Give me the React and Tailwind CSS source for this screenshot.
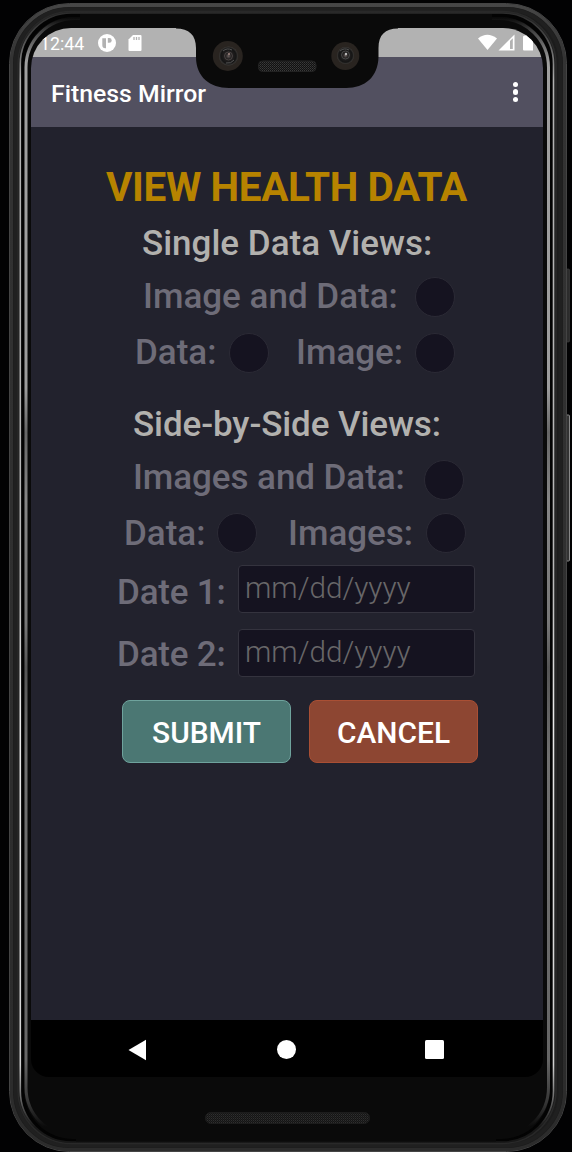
import React from "react";

function Bezel() {
  return (
    <svg className="absolute inset-0" width="572" height="1152" viewBox="0 0 572 1152" fill="none">
      <defs>
        <linearGradient id="rim" x1="0" y1="0" x2="0" y2="1152" gradientUnits="userSpaceOnUse">
          <stop offset="0" stopColor="#484848" />
          <stop offset="0.05" stopColor="#333" />
          <stop offset="0.95" stopColor="#2c2c2c" />
          <stop offset="1" stopColor="#2c2c2c" />
        </linearGradient>
        <linearGradient id="shine" x1="0" y1="18" x2="0" y2="1138" gradientUnits="userSpaceOnUse">
          <stop offset="0" stopColor="#0a0a0a" />
          <stop offset="0.012" stopColor="#444" />
          <stop offset="0.04" stopColor="#a0a0a0" />
          <stop offset="0.33" stopColor="#9c9c9c" />
          <stop offset="0.37" stopColor="#666" />
          <stop offset="0.43" stopColor="#858585" />
          <stop offset="0.54" stopColor="#777" />
          <stop offset="0.58" stopColor="#555" />
          <stop offset="0.66" stopColor="#707070" />
          <stop offset="0.93" stopColor="#666" />
          <stop offset="0.97" stopColor="#333" />
          <stop offset="0.99" stopColor="#0a0a0a" />
        </linearGradient>
        <linearGradient id="edge" x1="0" y1="13" x2="0" y2="1144" gradientUnits="userSpaceOnUse">
          <stop offset="0" stopColor="#2c2c2c" />
          <stop offset="0.02" stopColor="#444" />
          <stop offset="0.06" stopColor="#b0b0b0" />
          <stop offset="0.5" stopColor="#b8b8b8" />
          <stop offset="0.62" stopColor="#e8e8e8" />
          <stop offset="0.93" stopColor="#d0d0d0" />
          <stop offset="0.965" stopColor="#555" />
          <stop offset="0.985" stopColor="#181818" />
        </linearGradient>
      </defs>
      <rect x="565" y="269" width="4.500" height="73" rx="1" fill="#2c2c2c" stroke="#444" strokeWidth=".6" />
      <rect x="565" y="415" width="4.500" height="146" rx="1" fill="#333" stroke="#888" strokeWidth="1" />
      <rect x="9.5" y="3.5" width="557" height="1148" rx="60" fill="#1c1c1c" stroke="#444" strokeWidth="1" />
      <rect x="11.500" y="5.500" width="553" height="1144" rx="58" stroke="url(#rim)" strokeWidth="3" />
      <rect x="15.500" y="9.500" width="545" height="1136" rx="54" stroke="#202020" strokeWidth="4" />
      <rect x="18" y="11.500" width="538" height="1132" rx="53" stroke="#292929" strokeWidth="1.500" />
      <rect x="20.300" y="13" width="533.200" height="1129" rx="51" fill="#030303" stroke="url(#edge)" strokeWidth="1.600" />
      <rect x="24" y="17" width="526" height="1122" rx="49" fill="#0a0a0a" />
      <rect x="26" y="18.500" width="522.500" height="1118" rx="49" stroke="url(#shine)" strokeWidth="3" />
      <rect x="80" y="14" width="412" height="12" fill="#0a0a0a" />
      <rect x="76" y="1128" width="420" height="13.500" fill="#0a0a0a" />
    </svg>
  );
}

function Notch() {
  return (
    <svg className="absolute left-[176px] top-[27px]" width="222" height="62" viewBox="176 27 222 62" fill="none">
      <defs>
        <pattern id="mesh" width="2" height="2" patternUnits="userSpaceOnUse">
          <rect width="2" height="2" fill="#111" />
          <rect width="1" height="1" fill="#3a3a3a" />
          <rect x="1" y="1" width="1" height="1" fill="#2c2c2c" />
        </pattern>
        <radialGradient id="lens">
          <stop offset="0" stopColor="#6b6260" />
          <stop offset="0.3" stopColor="#252222" />
          <stop offset="0.8" stopColor="#151515" />
          <stop offset="1" stopColor="#3c3a38" />
        </radialGradient>
      </defs>
      <path d="M176 27V28.500C189 28.500 196 35 196 48V57C196 77 210 88 229 88H346C365 88 378 77 378.500 57V48C378.500 35 385 28.500 398 28.500V27Z" fill="#0a0a0a" />
      <circle cx="227.800" cy="56" r="15" fill="#292420" />
      <circle cx="228.500" cy="56" r="9.500" fill="url(#lens)" />
      <path d="M223 51a8 8 0 0 1 9-1M234 60a8 8 0 0 1-8 3" stroke="#555" />
      <circle cx="228.500" cy="56" r="4" stroke="#494342" />
      <circle cx="229" cy="54" r="1" fill="#a78b86" />
      <circle cx="345.300" cy="56" r="14" fill="#292420" />
      <circle cx="345.500" cy="55.500" r="8.500" fill="url(#lens)" />
      <path d="M340 51a8 8 0 0 1 9-1" stroke="#555" />
      <circle cx="345.500" cy="55" r="4" stroke="#494949" />
      <circle cx="346" cy="54" r="1.200" fill="#bbb" />
      <rect x="258.500" y="61" width="57.500" height="10.500" rx="4" fill="url(#mesh)" stroke="#222" />
    </svg>
  );
}

function StatusBar() {
  return (
    <div className="flex h-[29px] shrink-0 items-center bg-[#b2b2b2] text-white">
      <span className="ml-[9px] w-[58px] whitespace-nowrap pt-[2px] text-[17.8px] leading-none">12:44</span>
      <svg width="18" height="18" viewBox="0 0 18 18">
        <circle cx="9" cy="9" r="9" fill="#fff" />
        <path d="M4.300 4.200H8V14.200H7.300A3 3 0 0 1 4.300 11.200Z" fill="#b2b2b2" />
        <path d="M9.800 4H11.300A2.400 2.400 0 0 1 11.300 8.800H9.800Z" fill="#b2b2b2" />
      </svg>
      <svg className="ml-[12px]" width="14" height="16" viewBox="0 0 14 16">
        <path d="M5 0H12.500Q13.500 0 13.500 1V15Q13.500 16 12.500 16H1.500Q.5 16 .5 15V4.500Z" fill="#fff" />
        <path d="M6 2v3M8.500 2v3M11 2v3" stroke="#b2b2b2" strokeWidth="1.300" />
      </svg>
      <svg className="ml-auto mr-[8px]" width="57" height="17" viewBox="0 0 57 17">
        <path d="M0 4.500Q9.300-3 19 4.500L9.500 16Z" fill="#fff" />
        <path d="M20.500 16.500L36.500 .5V16.500Z" fill="#fff" />
        <path d="M32 7L34.800 4.300V15H32Z" fill="#b2b2b2" />
        <path d="M45 3Q45 1.500 46.500 1.500H48V0H52V1.500H55V16.500H46Q45 16.500 45 15.500Z" fill="#fff" />
      </svg>
    </div>
  );
}

function AppBar() {
  return (
    <header className="flex h-[70px] shrink-0 items-center justify-between bg-[#525060] pl-[20px] pr-[25px]">
      <h1 className="pt-[5px] text-[24.8px] font-medium leading-none text-white">Fitness Mirror</h1>
      <button className="flex flex-col gap-[2px]" aria-label="More options">
        <span className="size-[5.5px] rounded-full bg-white" />
        <span className="size-[5.5px] rounded-full bg-white" />
        <span className="size-[5.5px] rounded-full bg-white" />
      </button>
    </header>
  );
}

const Radio = () => <span className="size-[40px] shrink-0 rounded-full border border-[#2b2a35] bg-[#151320]" />;

function DateField({ label }) {
  return (
    <label className="flex h-[48px] items-center pl-[86px]">
      <span className={`w-[121px] shrink-0 tracking-[-0.2px] text-[#6e6c78] ${label === "Date 1:" ? "pt-[8px]" : "pt-[3px]"}`}>
        {label}
      </span>
      <span className="flex h-[48px] w-[237px] items-center rounded-[4px] border border-[#34333e] bg-[#151320] pb-[2px] pl-[6px] text-[29.7px] font-light text-[#686769]">
        mm/dd/yyyy
      </span>
    </label>
  );
}

function HealthForm() {
  return (
    <main className="flex h-[893px] shrink-0 flex-col whitespace-nowrap bg-[#22222d] pt-[40px] text-[35px] font-medium leading-[40px] text-[#6e6c78]">
      <h2 className="h-[40px] pl-[75px] text-[40.5px] font-bold tracking-[-0.4px] text-[#b78300]">VIEW HEALTH DATA</h2>
      <h3 className="mt-[17px] h-[39px] pl-[111px] text-[#b2b1ae]">Single Data Views:</h3>
      <div className="mt-[14px] flex h-[40px] pl-[112px]">
        <span className="w-[272px]">Image and Data:</span>
        <Radio />
      </div>
      <div className="mt-[16px] flex h-[40px] pl-[104px]">
        <span className="w-[94px]">Data:</span>
        <Radio />
        <span className="ml-[27px] w-[119px]">Image:</span>
        <Radio />
      </div>
      <h3 className="mt-[32px] h-[39px] pl-[102px] tracking-[-0.1px] text-[#b2b1ae]">Side-by-Side Views:</h3>
      <div className="mt-[16px] flex h-[40px] pl-[102px]">
        <span className="-mt-[2px] w-[291px] tracking-[-0.07px]">Images and Data:</span>
        <Radio />
      </div>
      <div className="mt-[13px] flex h-[40px] pl-[93px]">
        <span className="w-[93px] pt-px">Data:</span>
        <Radio />
        <span className="ml-[31px] w-[138px] pt-px">Images:</span>
        <Radio />
      </div>
      <div className="mt-[12px] flex flex-col gap-[16px]">
        <DateField label="Date 1:" />
        <DateField label="Date 2:" />
      </div>
      <div className="mt-[23px] flex gap-[18px] pl-[91px] text-[29.9px] text-white">
        <button className="h-[63px] w-[169px] rounded-[8px] border border-[#6fa39d] bg-[#4b7773] pt-[2px]">SUBMIT</button>
        <button className="h-[63px] w-[169px] rounded-[8px] border border-[#a94f34] bg-[#8d4632] pt-[2px]">CANCEL</button>
      </div>
    </main>
  );
}

function NavBar() {
  return (
    <nav className="flex h-[57px] shrink-0 items-center bg-black pl-[97px] pt-[2px]">
      <svg width="19" height="22" viewBox="0 0 19 22">
        <path d="M.5 11L18 .8V21.200Z" fill="#fff" />
      </svg>
      <span className="ml-[130px] size-[19px] rounded-full bg-white" />
      <span className="ml-[129px] size-[19px] rounded-[1.5px] bg-white" />
    </nav>
  );
}

export default function App() {
  return (
    <div className="relative h-[1152px] w-[572px] overflow-hidden bg-[#020203] pl-[31px] pt-[28px] font-['Roboto',sans-serif]">
      <Bezel />
      <div className="relative flex h-[1049px] w-[512px] flex-col overflow-hidden rounded-b-[18px] rounded-t-[40px]">
        <StatusBar />
        <AppBar />
        <HealthForm />
        <NavBar />
      </div>
      <Notch />
      <svg className="relative ml-[174px] mt-[35px]" width="166" height="12" viewBox="0 0 166 12">
        <defs>
          <pattern id="grille" width="2" height="2" patternUnits="userSpaceOnUse">
            <rect width="2" height="2" fill="#151515" />
            <rect width="1" height="1" fill="#2f2f2f" />
            <rect x="1" y="1" width="1" height="1" fill="#222" />
          </pattern>
        </defs>
        <rect x=".5" y=".5" width="164" height="11" rx="5" fill="url(#grille)" stroke="#1c1c1c" />
      </svg>
    </div>
  );
}
